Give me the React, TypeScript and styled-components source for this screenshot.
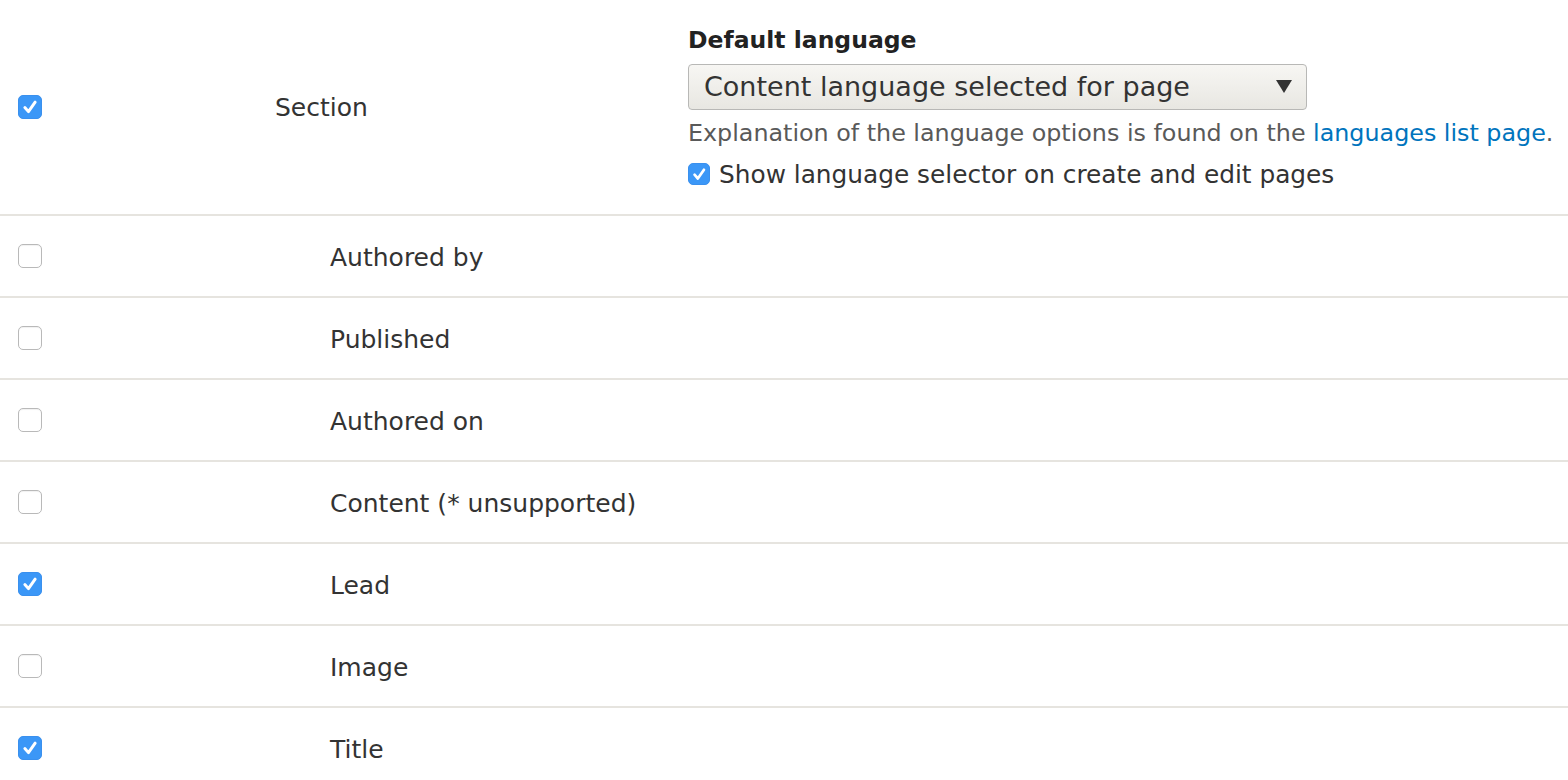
import styled, { createGlobalStyle } from 'styled-components'

const GlobalStyle = createGlobalStyle`
  html, body {
    margin: 0;
    padding: 0;
    background: #ffffff;
  }
  body {
    font-family: "DejaVu Sans", "Liberation Sans", sans-serif;
    color: #333333;
  }
`

const Table = styled.div`
  width: 1568px;
  display: flex;
  flex-direction: column;
`

const Row = styled.div<{ $tall?: boolean }>`
  display: flex;
  align-items: center;
  height: ${(p) => (p.$tall ? '216px' : '82px')};
  border-bottom: 2px solid #e6e4df;
  box-sizing: border-box;
`

const CheckCell = styled.div`
  width: 275px;
  padding-left: 18px;
  box-sizing: border-box;
  display: flex;
  align-items: center;
`

const LabelCell = styled.div<{ $indent?: boolean }>`
  width: 413px;
  padding-left: ${(p) => (p.$indent ? '55px' : '0')};
  padding-top: ${(p) => (p.$indent ? '2px' : '0')};
  box-sizing: border-box;
  font-size: 25px;
  color: #333333;
`

const SettingsCell = styled.div`
  flex: 1;
  display: flex;
  flex-direction: column;
`

const Box = styled.span<{ $checked?: boolean; $size?: number }>`
  width: ${(p) => p.$size ?? 24}px;
  height: ${(p) => p.$size ?? 24}px;
  border-radius: 5px;
  box-sizing: border-box;
  display: inline-flex;
  align-items: center;
  justify-content: center;
  flex-shrink: 0;
  background: ${(p) => (p.$checked ? '#3b97f7' : '#ffffff')};
  border: ${(p) => (p.$checked ? '1px solid #3a90ee' : '1px solid #b9b9b9')};
  box-shadow: ${(p) => (p.$checked ? 'none' : 'inset 0 1px 1px rgba(0,0,0,0.06)')};
`

const FieldTitle = styled.div`
  font-size: 23.5px;
  font-weight: bold;
  color: #222222;
  line-height: 28px;
  margin-bottom: 10px;
`

const Select = styled.div`
  width: 619px;
  height: 46px;
  box-sizing: border-box;
  border: 1px solid #b8b8b6;
  border-radius: 4px;
  background: linear-gradient(#f7f6f3, #e8e7e2);
  display: flex;
  align-items: center;
  justify-content: space-between;
  padding: 0 14px 0 15px;
  font-size: 27px;
  color: #333333;
`

const Arrow = styled.span`
  width: 0;
  height: 0;
  border-left: 8px solid transparent;
  border-right: 8px solid transparent;
  border-top: 13px solid #333333;
`

const Description = styled.div`
  font-size: 23.8px;
  color: #595959;
  margin-top: 9px;
  line-height: 28px;
`

const Link = styled.a`
  color: #0074bd;
  text-decoration: none;
`

const InlineCheck = styled.label`
  display: flex;
  align-items: center;
  gap: 9px;
  margin-top: 13px;
  font-size: 24.8px;
  color: #333333;
`

const Check = ({ checked, size }: { checked?: boolean; size?: number }) => (
  <Box $checked={checked} $size={size}>
    {checked && (
      <svg width={(size ?? 24) * 0.75} height={(size ?? 24) * 0.75} viewBox="0 0 14 14">
        <path d="M3 7.4 L5.8 10.6 L11 3.2" fill="none" stroke="#ffffff" strokeWidth="2.3" strokeLinecap="round" strokeLinejoin="round" />
      </svg>
    )}
  </Box>
)

const fields = [
  { label: 'Authored by', checked: false },
  { label: 'Published', checked: false },
  { label: 'Authored on', checked: false },
  { label: 'Content (* unsupported)', checked: false },
  { label: 'Lead', checked: true },
  { label: 'Image', checked: false },
  { label: 'Title', checked: true },
]

const App = () => {
  return (
    <>
      <GlobalStyle />
      <Table>
        <Row $tall>
          <CheckCell>
            <Check checked />
          </CheckCell>
          <LabelCell>Section</LabelCell>
          <SettingsCell>
            <FieldTitle>Default language</FieldTitle>
            <Select>
              <span>Content language selected for page</span>
              <Arrow />
            </Select>
            <Description>
              Explanation of the language options is found on the <Link href="#">languages list page</Link>.
            </Description>
            <InlineCheck>
              <Check checked size={22} />
              Show language selector on create and edit pages
            </InlineCheck>
          </SettingsCell>
        </Row>
        {fields.map((f) => (
          <Row key={f.label}>
            <CheckCell>
              <Check checked={f.checked} />
            </CheckCell>
            <LabelCell $indent>{f.label}</LabelCell>
          </Row>
        ))}
      </Table>
    </>
  )
}

export default App
